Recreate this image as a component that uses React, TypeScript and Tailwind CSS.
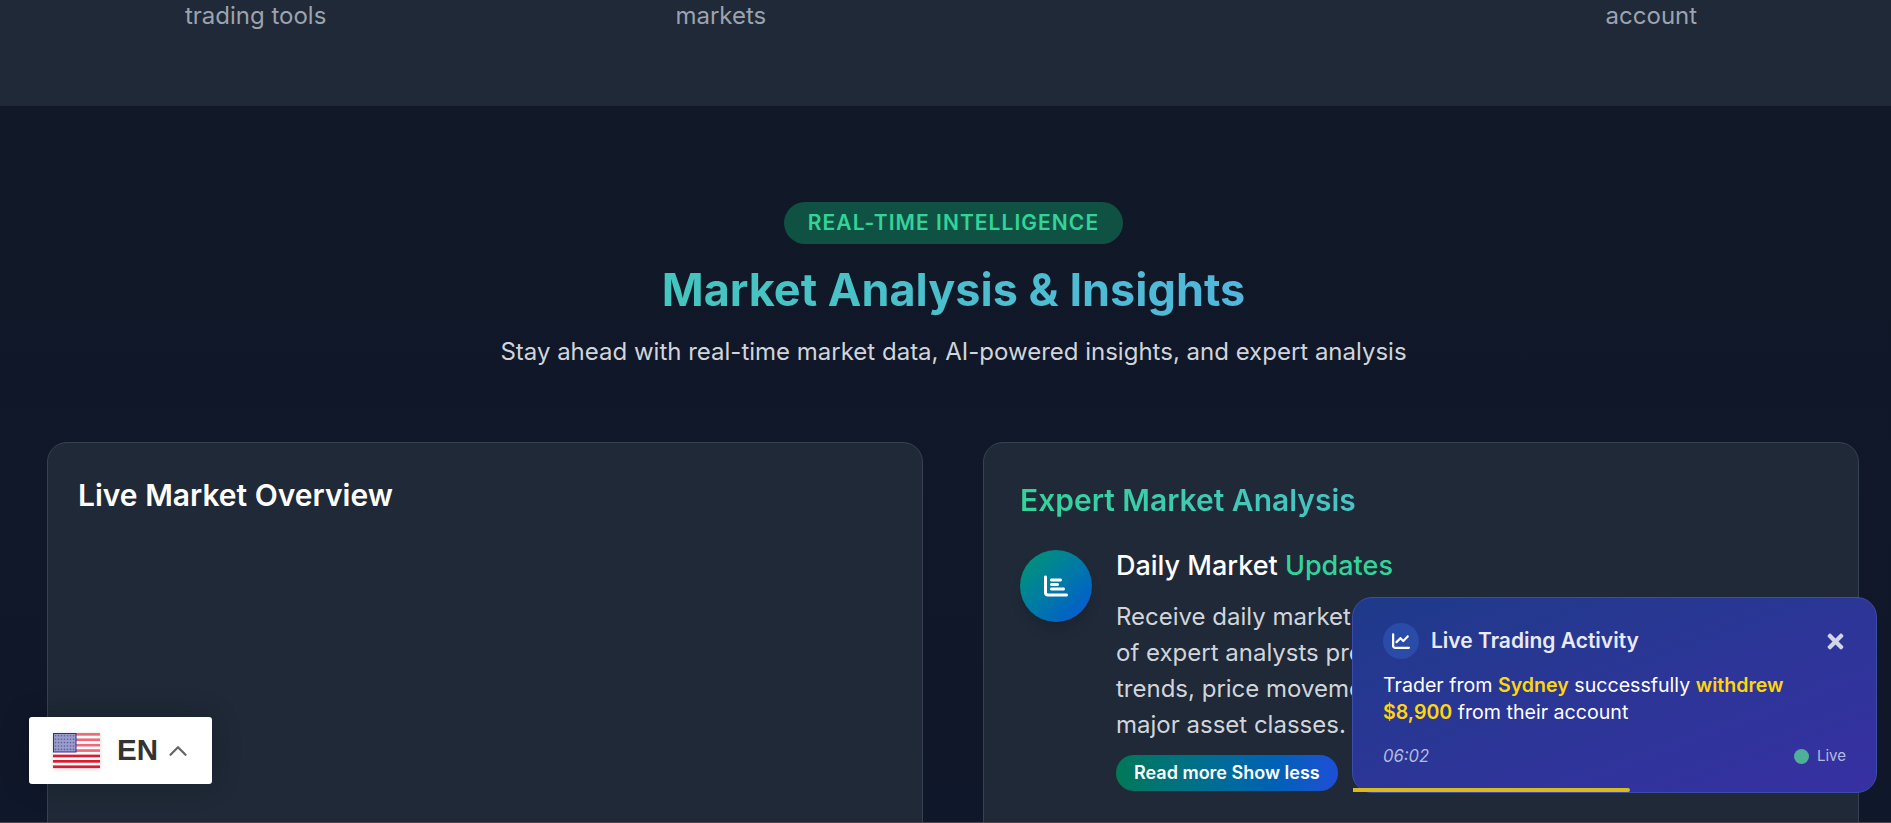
import { ChevronUp } from "lucide-react";
import { FaTimes } from "react-icons/fa";
import { FaChartBar, FaChartLine } from "react-icons/fa6";

const UsFlag = () => (
  <svg className="h-9 w-[47px] drop-shadow-sm" viewBox="0 0 47 36">
    <rect fill="#fff" height="35" width="47" />
    {[0, 1, 2, 3, 4, 5, 6].map((i) => (
      <rect
        fill={i < 4 ? "#f0697a" : "#dc1a30"}
        height="2.7"
        key={i}
        width="47"
        y={i * 5.4}
      />
    ))}
    <rect fill="#fff" height="2" opacity="0.35" width="47" y="9" />
    <rect fill="#2d2f8f" height="19.5" width="23.5" />
    <rect fill="#9a9cc9" height="17.5" width="21.5" x="1" y="1" />
    {Array.from({ length: 35 }).map((_, i) => (
      <circle
        cx={2.5 + (i % 7) * 3}
        cy={2.8 + Math.floor(i / 7) * 3.4}
        fill="#5c5fae"
        key={i}
        r="0.8"
      />
    ))}
  </svg>
);

const App = () => {
  return (
    <div className="relative h-[823px] w-full overflow-hidden bg-[#111827] font-['Inter',sans-serif]">
      <div className="w-[1907px]">
        {/* Features strip, scrolled off */}
        <div className="h-[106px] bg-[#1f2937] px-[47px]">
          <div className="grid grid-cols-4 gap-12 text-center text-2xl leading-8 text-[#9ca3af]">
            <p>trading tools</p>
            <p>markets</p>
            <p />
            <p>account</p>
          </div>
        </div>

        <section className="h-[716px] overflow-hidden bg-gradient-to-b from-[#111827] to-[#0f172a] px-[47px] pt-24">
          <div className="flex flex-col items-center">
            <span className="flex h-[42px] items-center rounded-full bg-[#0f5244] px-6 text-[21px] font-semibold tracking-wider text-[#34d399]">
              REAL-TIME INTELLIGENCE
            </span>
            <h2 className="mt-[12px] w-full bg-gradient-to-r from-[#34d399] to-[#60a5fa] bg-clip-text text-center text-[45px] leading-[67px] font-bold text-transparent">
              Market Analysis &amp; Insights
            </h2>
            <p className="mt-[11px] text-2xl leading-9 text-[#d1d5db]">
              Stay ahead with real-time market data, AI-powered insights, and expert analysis
            </p>
          </div>

          <div className="mt-[72px] grid grid-cols-[876px_876px] gap-[60px]">
            <div className="h-[500px] rounded-[20px] border border-[#374151] bg-[#1f2937] px-[30px] pt-[30px]">
              <h3 className="text-[30px] leading-[45px] font-semibold text-white">Live Market Overview</h3>
            </div>

            <div className="h-[500px] rounded-[20px] border border-[#374151] bg-[#1f2937] px-[36px] pt-[35px]">
              <h3 className="bg-gradient-to-r from-[#34d399] to-[#60a5fa] bg-clip-text text-[30px] leading-[45px] font-semibold text-transparent">
                Expert Market Analysis
              </h3>
              <div className="mt-[27px] flex gap-6">
                <div className="flex size-[72px] shrink-0 items-center justify-center rounded-full bg-gradient-to-br from-[#059669] to-[#1d4ed8] text-2xl text-white shadow-lg">
                  <FaChartBar />
                </div>
                <div>
                  <h4 className="-mt-[2px] text-[27px] leading-9 font-medium text-white">
                    Daily Market <span className="text-[#34d399]">Updates</span>
                  </h4>
                  <p className="mt-[15px] text-2xl leading-9 text-[#d1d5db]">
                    Receive daily market analysis and insights from our team
                    <br />
                    of expert analysts providing detailed commentary on market
                    <br />
                    trends, price movements, and trading opportunities across all
                    <br />
                    major asset classes.
                  </p>
                  <button
                    className="mt-[12px] h-9 rounded-full bg-gradient-to-r from-[#047857] to-[#1d4ed8] px-[18px] text-lg font-semibold text-white"
                    type="button"
                  >
                    Read more Show less
                  </button>
                </div>
              </div>
            </div>
          </div>
        </section>
        <div className="h-px bg-[#4a4a3f]" />
      </div>

      {/* Language switcher */}
      <div className="absolute top-[717px] left-[29px] flex h-[67px] w-[183px] items-center rounded-[3px] bg-white pl-6 shadow-[0_0_30px_rgba(0,0,0,0.2)]">
        <UsFlag />
        <span className="ml-[17px] font-['Liberation_Sans',sans-serif] text-[29.5px] font-bold text-[#333]">EN</span>
        <ChevronUp className="ml-[5px] size-[30px] text-[#666]" strokeWidth={1.8} />
      </div>

      {/* Live activity toast */}
      <div className="absolute top-[597px] left-[1352px] h-[196px] w-[525px] rounded-[20px] border border-[#3b4cab] bg-gradient-to-br from-[#1e3a8a] to-[#3730a3] px-[30px] pt-[25px]">
        <div className="flex items-center justify-between">
          <div className="flex items-center gap-3">
            <div className="flex size-9 items-center justify-center rounded-full bg-[#2a4ba8] text-lg text-white">
              <FaChartLine />
            </div>
            <span className="text-[21px] font-semibold text-[#e8eaf6]">Live Trading Activity</span>
          </div>
          <FaTimes className="-mr-[1px] size-[23px] text-[#d0d4ec]" />
        </div>
        <p className="mt-[13px] w-[463px] text-[19.6px] leading-[27px] text-white">
          Trader from <span className="font-semibold text-[#ffd60a]">Sydney</span> successfully{" "}
          <span className="font-semibold text-[#ffd60a]">withdrew $8,900</span> from their account
        </p>
        <div className="mt-[18px] flex items-center justify-between">
          <span className="text-[16.6px] text-[#b5bbe0] italic">06:02</span>
          <span className="flex items-center gap-2 text-[15px] text-[#b5bbe0]">
            <span className="size-[15px] rounded-full bg-[#4fb09a]" />
            Live
          </span>
        </div>
        <div className="absolute bottom-0 left-0 h-1 w-[53%] rounded-r bg-[#dcb91d]" />
      </div>
    </div>
  );
};

export default App;
